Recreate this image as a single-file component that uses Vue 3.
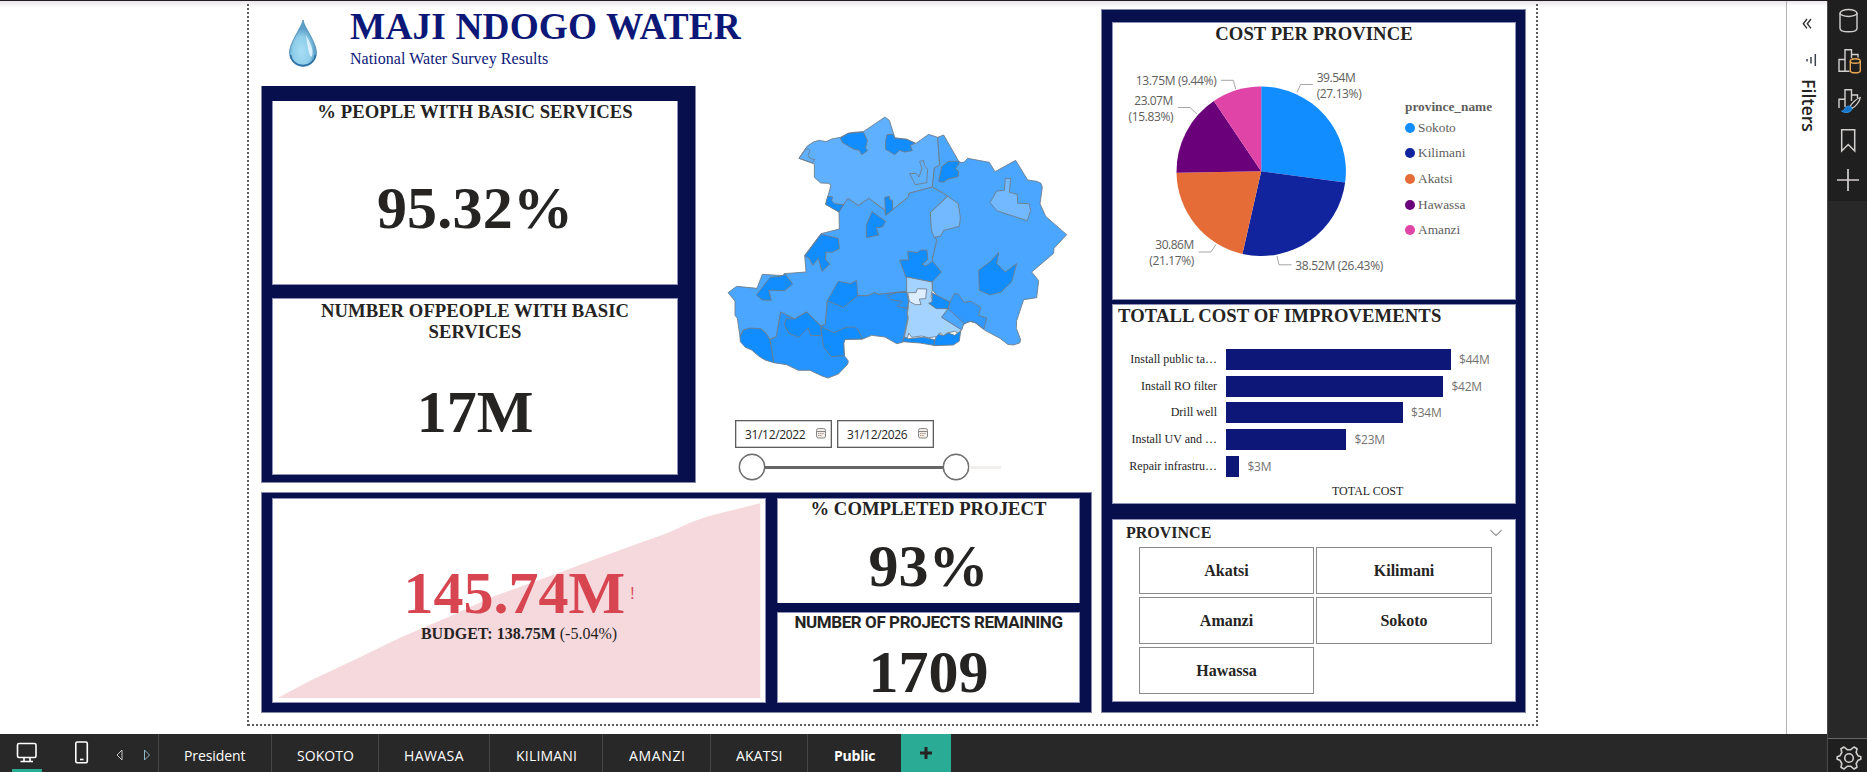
<script setup>
const legend = [
  { name: 'Sokoto', color: '#118dff' },
  { name: 'Kilimani', color: '#12239e' },
  { name: 'Akatsi', color: '#e66c37' },
  { name: 'Hawassa', color: '#6b007b' },
  { name: 'Amanzi', color: '#e044a7' },
]
const shares = [27.13, 26.43, 21.17, 15.83, 9.44]
const cx = 171.2
const cy = 171.3
const r = 84.7
let acc = 0
const slices = shares.map((s, i) => {
  const a0 = (acc / 100) * Math.PI * 2
  acc += s
  const a1 = (acc / 100) * Math.PI * 2
  const p = (a) => `${(cx + r * Math.sin(a)).toFixed(2)} ${(cy - r * Math.cos(a)).toFixed(2)}`
  return { d: `M${cx} ${cy}L${p(a0)}A${r} ${r} 0 0 1 ${p(a1)}Z`, fill: legend[i].color }
})
const pieLabels = [
  { t: '39.54M', x: 226.7, y: 82, w: 39 },
  { t: '(27.13%)', x: 226.7, y: 98, w: 45 },
  { t: '13.75M (9.44%)', x: 45.7, y: 85, w: 81 },
  { t: '23.07M', x: 44.3, y: 105, w: 39 },
  { t: '(15.83%)', x: 38.6, y: 121, w: 45 },
  { t: '30.86M', x: 65.3, y: 249, w: 39 },
  { t: '(21.17%)', x: 59.3, y: 265, w: 45 },
  { t: '38.52M (26.43%)', x: 205.3, y: 270, w: 88 },
]
const leaders = [
  '207,92.5 210.5,84.5 222.7,84.5',
  '131,80.3 143.3,80.3 145.7,89',
  '88,107.5 100,107.5 107,114',
  '108.5,252 121,252 126,244.3',
  '187,256 189,264.8 201.7,264.8',
]
const bars = [
  { label: 'Install public ta…', w: 225, v: '$44M' },
  { label: 'Install RO filter', w: 217.4, v: '$42M' },
  { label: 'Drill well', w: 177, v: '$34M' },
  { label: 'Install UV and …', w: 120.4, v: '$23M' },
  { label: 'Repair infrastru…', w: 13.4, v: '$3M' },
]
const provinces = ['Akatsi', 'Kilimani', 'Amanzi', 'Sokoto', 'Hawassa']
const dates = ['31/12/2022', '31/12/2026']
const tabs = [
  { n: 'President', w: 113, t: 61.5 },
  { n: 'SOKOTO', w: 107, t: 57 },
  { n: 'HAWASA', w: 111, t: 59.5 },
  { n: 'KILIMANI', w: 113, t: 61 },
  { n: 'AMANZI', w: 108, t: 56 },
  { n: 'AKATSI', w: 97, t: 46.5 },
  { n: 'Public', w: 94, t: 41.5, on: true },
]
const regions = [
  { f: '#5fb0ff', p: '237,175 250,155 262,138 280,126 298,121 318,125 335,117 361,112 385,100 400,97 430,95 495,51 508,61 521,102 524,113 560,118 588,130 626,103 653,112 659,195 643,204 637,261 567,280 565,291 497,346 494,330 446,295 415,317 384,295 371,314 357,336 317,313 333,255 325,250 302,249 283,232 283,192' },
  { f: '#4aa6ff', p: '653,112 671,105 718,187 732,187 743,175 808,187 825,215 887,181 923,240 950,244 963,250 967,262 960,311 977,349 1040,404 1002,445 1001,460 935,516 956,542 950,593 911,599 890,662 889,685 902,719 899,729 880,735 863,733 840,715 797,692 788,686 765,668 745,663 727,677 690,628 637,570 637,475 650,421 643,408 631,338 683,288 637,261 643,204 659,195' },
  { f: '#4aa6ff', p: '371,314 384,295 415,317 446,295 494,330 497,346 565,291 567,280 637,261 683,288 631,338 643,408 650,421 637,475 637,545 560,574 475,583 464,578 443,587 413,587 322,603 316,673 302,678 260,636 224,657 182,636 169,710 149,719 138,700 122,686 70,690 60,710 52,655 45,646 45,603 24,578 50,559 111,565 127,523 190,527 192,521 258,516 254,466 303,401 358,387 357,336' },
  { f: '#2694ff', p: '182,636 224,657 260,636 302,678 316,673 322,603 413,587 443,587 464,578 475,583 560,574 566,608 561,640 563,655 548,727 530,731 495,711 455,706 428,717 375,718 371,730 373,767 385,783 383,793 355,822 324,834 306,828 270,811 235,811 200,794 161,788 149,719 169,710' },
  { f: '#118dff', p: '60,710 70,690 90,684 122,686 138,700 149,719 154,740 161,788 135,780 117,769 95,750 76,742 61,725' },
  { f: '#118dff', p: '302,680 342,698 378,682 402,681 413,687 428,717 375,718 371,730 373,767 334,770 310,740' },
  { f: '#118dff', p: '198,656 224,657 260,636 302,678 305,707 271,706 265,684 237,712 207,700 193,675' },
  { f: '#118dff', p: '109,585 151,532 182,529 196,523 218,552 194,572 146,571 154,601 127,600' },
  { f: '#118dff', p: '258,464 303,403 355,415 358,446 336,457 318,456 316,477 329,493 306,514 295,475 278,496 268,475 254,468' },
  { f: '#118dff', p: '355,544 392,551 410,541 413,587 370,622 322,602' },
  { f: '#118dff', p: '317,313 323,289 338,291 335,302 344,311 371,314 357,336' },
  { f: '#118dff', p: '456,335 497,364 487,381 469,383 476,405 439,413 439,376' },
  { f: '#118dff', p: '494,292 508,289 509,299 517,301 518,329 497,346' },
  { f: '#118dff', p: '361,114 385,100 430,96 442,121 437,144 443,152 425,164 418,151 402,148 368,128' },
  { f: '#118dff', p: '501,104 520,103 524,115 560,118 585,130 571,136 577,152 553,156 539,151 524,164 497,148 497,121' },
  { f: '#118dff', p: '665,200 686,184 718,184 714,197 706,205 716,215 714,230 684,237 671,246 656,245' },
  { f: '#5fb0ff', p: '237,175 254,152 264,145 270,151 264,166 270,175 285,179 277,188' },
  { f: '#5fb0ff', p: '569,221 588,220 597,231 606,205 599,185 610,181 614,197 623,208 620,248 586,254' },
  { f: '#72b9ff', p: '856,235 872,236 868,277 892,283 893,310 927,311 932,332 922,362 832,333 810,308 830,273 853,271' },
  { f: '#72b9ff', p: '683,289 715,311 721,353 718,379 671,391 662,408 643,412 634,390 631,338' },
  { f: '#118dff', p: '836,457 830,491 856,516 890,491 875,545 843,576 810,585 778,571 776,511 812,484' },
  { f: '#118dff', p: '539,480 566,480 563,454 592,458 602,450 621,451 623,479 606,493 618,498 638,484 664,516 636,546 558,532' },
  { f: '#a4d3ff', p: '560,531 636,546 637,570 633,590 655,622 684,626 665,652 725,688 718,702 704,694 680,699 672,709 660,698 650,710 625,713 605,708 575,712 566,699 563,713 553,712 565,655 562,640 565,620 560,574' },
  { f: '#dceeff', p: '563,578 588,578 592,566 620,567 617,596 598,597 603,614 586,614 568,604' },
  { f: '#2694ff', p: '502,587 529,578 560,577 566,606 560,626 533,619 545,604 512,599' },
  { f: '#118dff', p: '637,579 690,606 684,626 649,626 626,610 636,606' },
  { f: '#2f99ff', p: '690,606 703,581 715,582 732,607 753,604 782,622 776,646 800,654 792,687 768,669 753,664 732,671 684,628' },
  { f: '#4aa6ff', p: '684,626 732,670 725,690 665,652' },
  { f: '#118dff', p: '548,725 553,712 565,716 610,712 645,719 641,736 600,729' },
  { f: '#118dff', p: '656,703 670,707 685,699 704,706 722,693 718,723 700,735 641,737 647,713' },
]
</script>

<template>
  <div class="app">
    <main class="canvas">
      <div class="page">
        <div class="left">
          <header class="head">
            <svg class="drop" width="30" height="49" viewBox="0 0 30 49">
              <defs>
                <radialGradient id="dg" cx=".45" cy=".68" r=".5">
                  <stop offset="0" stop-color="#a6def5" />
                  <stop offset=".65" stop-color="#8fcde9" />
                  <stop offset="1" stop-color="#5c9fc8" />
                </radialGradient>
              </defs>
              <path d="M15 1C16 8 28.500 23 28.500 34A13.500 13.500 0 0 1 1.500 34C1.500 23 14 8 15 1Z" fill="url(#dg)" stroke="#4a8ab5" stroke-width=".8" />
              <path d="M2.500 36A12.600 12 0 0 0 27.500 36" fill="none" stroke="#2c6da3" stroke-width="1.400" />
              <path d="M18 16C22 23 26 31 24 37C22 40 20 33 18 16Z" fill="#e4f6fd" opacity=".85" />
            </svg>
            <div class="headings">
              <h1>MAJI NDOGO WATER</h1>
              <p>National Water Survey Results</p>
            </div>
          </header>

          <div class="upper">
            <section class="frame people">
              <div class="card c1">
                <h2>% PEOPLE WITH BASIC SERVICES</h2>
                <div class="big">95.32%</div>
              </div>
              <div class="card c2">
                <h2>NUMBER OFPEOPLE WITH BASIC SERVICES</h2>
                <div class="big">17M</div>
              </div>
            </section>
            <section class="middle">
              <svg class="map" width="360" height="290" viewBox="0 0 1080 870">
                <polygon v-for="(g, i) in regions" :key="i" :points="g.p" :fill="g.f" stroke="#6f7c88" stroke-width="2.600" stroke-linejoin="round" />
              </svg>
              <div class="dates">
                <div v-for="d in dates" :key="d" class="date">
                  <svg width="62" height="16"><text x="0" y="12.500" textLength="60.700">{{ d }}</text></svg>
                  <svg width="10" height="11" viewBox="0 0 10 11" fill="none" stroke="#8a8886">
                    <rect x=".5" y=".5" width="9" height="9.500" rx="2" fill="#f1edea" />
                    <path d="M.5 3.500H9.500" /><path d="M2 5.500H8M2 7.500H6" stroke="#b89a86" stroke-dasharray="1.500 .6" />
                  </svg>
                </div>
              </div>
              <div class="slider"><i class="knob"></i><i class="run"></i><i class="knob"></i><i class="rest"></i></div>
            </section>
          </div>

          <section class="frame lower">
            <div class="card kpi">
              <svg class="area" width="491" height="203" viewBox="273 499 491 203">
                <path d="M277.500 698L310 680.700L353.600 660.300L400 637.700L446.600 617.700L491.400 597.300L560.200 572.300L627 547.500L667 533.300L693 521.500L710 515.700L760.300 503.300V698Z" fill="#f6d9dd" />
              </svg>
              <div class="kpiText">
                <div class="value"><b>145.74M</b><span>!</span></div>
                <div class="goal"><b>BUDGET: 138.75M</b> (-5.04%)</div>
              </div>
            </div>
            <div class="stack">
              <div class="card done">
                <h2>% COMPLETED PROJECT</h2>
                <div class="big">93%</div>
              </div>
              <div class="card remain">
                <h2 class="din">NUMBER OF PROJECTS REMAINING</h2>
                <div class="big">1709</div>
              </div>
            </div>
          </section>
        </div>

        <section class="frame right">
          <div class="card pie">
            <h2>COST PER PROVINCE</h2>
            <div class="pieBody">
              <svg width="295" height="235" viewBox="23 44 295 235">
                <path v-for="s in slices" :key="s.fill" :d="s.d" :fill="s.fill" />
                <polyline v-for="l in leaders" :key="l" :points="l" fill="none" stroke="#a6a6a6" />
                <text v-for="l in pieLabels" :key="l.t" :x="l.x" :y="l.y" :textLength="l.w">{{ l.t }}</text>
              </svg>
              <div class="legend">
                <b>province_name</b>
                <div v-for="l in legend" :key="l.name"><i :style="{ background: l.color }"></i>{{ l.name }}</div>
              </div>
            </div>
          </div>
          <div class="card cost">
            <h2>TOTALL COST OF IMPROVEMENTS</h2>
            <div class="bars">
              <div v-for="b in bars" :key="b.label" class="bar">
                <span class="lab">{{ b.label }}</span>
                <i :style="{ width: b.w + 'px' }"></i>
                <span class="val">{{ b.v }}</span>
              </div>
            </div>
            <div class="axis">TOTAL COST</div>
          </div>
          <div class="card prov">
            <div class="provHead">
              <h3>PROVINCE</h3>
              <svg width="14" height="8" viewBox="0 0 14 8" fill="none" stroke="#555" stroke-width="1"><path d="M1.300 1L7 6.500L12.700 1" /></svg>
            </div>
            <div class="tiles"><div v-for="p in provinces" :key="p">{{ p }}</div></div>
          </div>
        </section>
      </div>
    </main>

    <aside class="filters">
      <svg width="40" height="140" viewBox="1787 1 40 140">
        <g fill="none" stroke="#333" stroke-width="1.400"><path d="M1807 19L1803.300 23.700L1807 28.400M1811 19L1807.300 23.700L1811 28.400" /></g>
        <path d="M1807 59V61.500M1811 57V63.500M1815.300 54V66" stroke="#3b4450" stroke-width="1.500" fill="none" />
        <text x="79" y="-1801.500" transform="rotate(90)" textLength="53" lengthAdjust="spacingAndGlyphs">Filters</text>
      </svg>
    </aside>

    <aside class="rail">
      <svg width="39" height="200" viewBox="1828 1 39 200" fill="none" stroke="#d2d0ce" stroke-width="1.400">
        <ellipse cx="1848.500" cy="13" rx="8.500" ry="3.500" /><path d="M1840 13V28.200C1840 33 1857 33 1857 28.200V13" />
        <path d="M1839 71.300V59.500H1845V71.300ZM1845 59.500V49.800H1851.500V54.500H1858V57.500M1845 71.300H1849.500M1851.500 54.500V58" />
        <g stroke="#e8a853"><ellipse cx="1855.300" cy="61" rx="5" ry="2.200" fill="#201f1f" /><path d="M1850.300 61V70.700C1850.300 73.500 1860.300 73.500 1860.300 70.700V61" /></g>
        <path d="M1839 108V99.300H1845V107M1845 99.300V89.800H1851.500V95H1857.500V98M1851.500 95V101" />
        <path d="M1860.300 97.500C1857 98 1851 104 1850.300 106.500L1852.300 108.300C1855 107 1860 101.500 1860.300 97.500Z" stroke-width="1.200" fill="#201f1f" />
        <path d="M1841.500 111C1845 111.300 1844 106.500 1848.500 106C1852 106 1853 109.500 1850.500 111.300C1848 113 1844 113 1841.500 111Z" fill="#1477cc" stroke="#3d9ae8" stroke-width=".8" />
        <path d="M1841.700 129.700H1854.700V151L1848.200 144.500L1841.700 151Z" stroke-width="1.500" />
        <path d="M1837 180H1859M1848 169V191" stroke-width="1.700" />
      </svg>
      <div class="gear">
        <svg width="26" height="26" viewBox="-13 -13 26 26" fill="none" stroke="#d2d0ce" stroke-width="1.600">
          <circle r="4.300" />
          <path d="M-5-11L-1.800-8.300H1.800L5-11L8-9.200L7.200-5.500L9-2.300L11.800-1.300V1.300L9 2.300L7.200 5.500L8 9.200L5 11L1.800 8.300H-1.800L-5 11L-8 9.200L-7.200 5.500L-9 2.300L-11.800 1.300V-1.300L-9-2.300L-7.200-5.500L-8-9.200Z" stroke-linejoin="round" />
        </svg>
      </div>
    </aside>

    <footer class="tabs">
      <svg class="views" width="158" height="38" viewBox="0 734 158 38" fill="none" stroke="#fff" stroke-width="1.600">
        <rect x="17.500" y="743.500" width="18.500" height="14" rx="1.500" /><path d="M24 758V761M30 758V761M20.500 761.500H33" />
        <rect x="75.800" y="742" width="11.500" height="20.700" rx="1.500" /><path d="M80 759.500H83.500" />
        <path d="M122 750V760L117 755Z" stroke="#c8c6c4" stroke-width="1" /><path d="M144.500 750V760L149.500 755Z" stroke="#8fb9cc" stroke-width="1" />
        <rect x="12" y="769" width="30" height="3" fill="#2aab95" stroke="none" />
      </svg>
      <div v-for="t in tabs" :key="t.n" class="tab" :class="{ on: t.on }" :style="{ width: t.w + 'px' }">
        <svg :width="t.t + 2" height="20"><text x="0" y="15" :textLength="t.t">{{ t.n }}</text></svg>
      </div>
      <div class="add"><svg width="12" height="12" viewBox="0 0 12 12"><path d="M6 0V12M0 6H12" stroke="#252423" stroke-width="3" /></svg></div>
    </footer>
  </div>
</template>

<style>
body { background: #fff; overflow: hidden; }
</style>

<style scoped>
* { box-sizing: border-box; }
h1, h2, h3, p { margin: 0; }
svg { display: block; flex: none; }
i { flex: none; display: block; }
.app {
  width: 1867px; height: 772px; border-top: 1px solid #201c20; background: #fff;
  display: grid; grid-template-columns: 1786px 41px 40px; grid-template-rows: 733px 38px;
  font-family: "Liberation Serif", "Times New Roman", serif; color: #252423; overflow: hidden;
}
.canvas { padding-left: 247px; background: linear-gradient(#e9e4e9, #fff 7px); }
.page {
  width: 1291px; height: 725px; display: flex; gap: 9px; padding-left: 14px;
  background:
    repeating-linear-gradient(to bottom, #5c5c5c 0 2px, transparent 2px 4px) 0 3px / 2px 722px no-repeat,
    repeating-linear-gradient(to bottom, #5c5c5c 0 2px, transparent 2px 4px) 100% 3px / 2px 722px no-repeat,
    repeating-linear-gradient(to right, transparent 0 1px, #5c5c5c 1px 3px, transparent 3px 4px) 0 100% / 100% 2px no-repeat;
}
.left { width: 831px; }
.head { height: 85px; display: flex; }
.drop { margin: 18px 0 0 27px; }
.headings { margin: 5px 0 0 32px; color: #0c1878; }
h1 { font-size: 37.33px; line-height: 42px; white-space: nowrap; letter-spacing: .15px; }
.headings p { font-size: 16px; line-height: 18px; margin-top: 2px; letter-spacing: .04px; }
.upper { display: flex; height: 397px; }
.frame { background: #07104d; border: 1px solid #8487a6; }
.card { background: #fff; border: 1px solid #8f92b4; }
h2 { font-size: 18.67px; line-height: 21px; text-align: center; white-space: nowrap; letter-spacing: .04px; }
.big { font-size: 60px; line-height: 66px; font-weight: bold; text-align: center; white-space: nowrap; }
.people { width: 435px; padding: 15px 17px 7px 10px; display: flex; flex-direction: column; gap: 13px; border-top-width: 0; }
.c1 { height: 185px; border-top: 0; }
.c1 .big { margin: 53px 0 0; letter-spacing: .2px; }
.c2 { height: 177px; }
.c2 h2 { white-space: normal; padding: 1px 40px 0; }
.c2 .big { margin-top: 37px; }
.middle { margin-left: 24px; }
.map { margin-top: 14px; }
.dates { display: flex; gap: 5px; margin: 30px 0 0 15px; }
.date { width: 97px; height: 28px; border: 1px solid #605e5c; box-shadow: inset 0 0 0 .5px #999; display: flex; align-items: center; padding: 0 0 1px 9px; gap: 9px; }
.date text { font: 12px "Open Sans", sans-serif; fill: #252423; }
.slider { display: flex; align-items: center; margin: 6px 0 0 19px; height: 26px; }
.knob { width: 26px; height: 26px; border: 1.500px solid #605e5c; border-radius: 50%; background: #fff; box-shadow: 0 0 0 .4px #777; }
.run { width: 178px; height: 3px; background: #666; }
.rest { width: 32px; height: 3px; background: #f1efed; }
.lower { margin-top: 9px; height: 221px; padding: 5px 11px 9px 10px; display: flex; gap: 11px; }
.kpi { width: 494px; position: relative; display: flex; justify-content: center; }
.area { position: absolute; left: 0; top: 0; }
.kpiText { position: relative; margin-top: 61px; text-align: center; }
.value { display: flex; align-items: center; justify-content: center; gap: 5px; color: #d64550; height: 65px; }
.value b { font-size: 60px; line-height: 66px; }
.value span { font: 16px/20px "Open Sans", sans-serif; }
.goal { font-size: 16px; line-height: 18px; }
.stack { width: 303px; display: flex; flex-direction: column; gap: 9px; }
.done { height: 105px; border-bottom: 0; }
.done h2 { margin-top: -1px; }
.done .big { margin-top: 14px; }
.remain { height: 91px; }
.remain .big { margin-top: 6px; }
h2.din { font-family: Roboto, sans-serif; font-size: 17px; letter-spacing: -.42px; margin-top: -1px; }
.right { width: 425px; height: 704px; margin-top: 8px; padding: 12px 9px 10px 10px; }
.pie { height: 278px; }
.pieBody { display: flex; }
.pieBody text { font: 12px "Open Sans", sans-serif; fill: #605e5c; }
.legend { margin: 55px 0 0 -3px; font-size: 13.33px; color: #605e5c; width: 95px; white-space: nowrap; }
.legend b { display: block; line-height: 16px; }
.legend div { display: flex; align-items: center; gap: 3px; height: 25.600px; }
.legend i { width: 10px; height: 10px; border-radius: 50%; }
.cost { height: 200px; margin-top: 4px; }
.cost h2 { text-align: left; padding-left: 5px; letter-spacing: .08px; }
.bars { margin-top: 20px; }
.bar { height: 26.700px; display: flex; align-items: center; }
.lab { width: 104px; margin-right: 9px; text-align: right; font-size: 12px; white-space: nowrap; }
.bar i { height: 21px; background: #0d1778; }
.val { margin-left: 8px; font: 12px "Open Sans", sans-serif; letter-spacing: -.2px; color: #757371; }
.axis { font-size: 12px; line-height: 14px; margin: 5px 0 0 219px; }
.prov { height: 183px; margin-top: 15px; }
.provHead { display: flex; justify-content: space-between; align-items: flex-start; padding: 4px 12px 0 13px; }
.provHead svg { margin-top: 5px; }
h3 { font-size: 16px; line-height: 18px; }
.tiles { display: grid; grid-template-columns: 175px 176px; grid-auto-rows: 47px; gap: 3px 2px; margin: 5px 0 0 26px; }
.tiles div { border: 1px solid #8a8a8a; font-size: 16px; font-weight: bold; display: flex; align-items: center; justify-content: center; }
.filters { border-left: 1px solid #b3b0ad; background: linear-gradient(#e9e4e9, #fff 5px); }
.filters text { font: 600 18px "Open Sans", sans-serif; fill: #252423; }
.rail { grid-row: 1 / 3; grid-column: 3; background: linear-gradient(#201f1f 200px, #292828 200px); border-left: 1px solid #4a4a4a; display: flex; flex-direction: column; justify-content: space-between; }
.gear { height: 34px; border-top: 1px solid #666; background: #201f1f; padding: 6px 0 0 8px; }
.tabs { grid-row: 2; grid-column: 1 / 3; background: #292828; display: flex; }
.tab { border-left: 1px solid #484644; display: flex; align-items: center; justify-content: center; padding: 5px 0 0 2px; }
.tab text { font: 14px "Open Sans", sans-serif; fill: #fff; }
.tab.on text { font-weight: 700; }
.add { width: 50px; background: #2aab95; display: flex; align-items: center; justify-content: center; }
</style>
